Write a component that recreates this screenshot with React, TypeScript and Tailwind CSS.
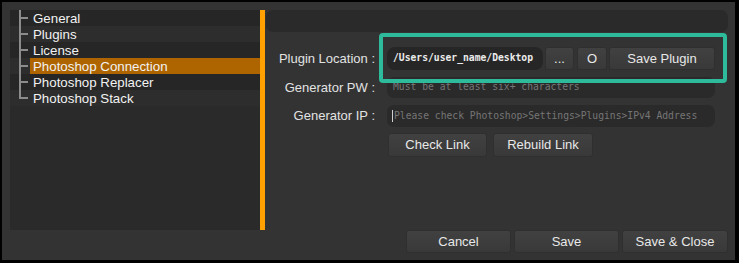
import React from "react";

const sans = { fontFamily: '"Liberation Sans", Arial, sans-serif' };
const mono = { fontFamily: '"DejaVu Sans Mono", "Liberation Mono", monospace' };

const treeItems = [
  "General",
  "Plugins",
  "License",
  "Photoshop Connection",
  "Photoshop Replacer",
  "Photoshop Stack",
];

function Btn({ children, className = "" }: { children: React.ReactNode; className?: string }) {
  return (
    <div
      className={
        "flex items-center justify-center rounded-[3px] border border-[#2f2f2f] bg-gradient-to-b from-[#414141] to-[#393939] text-[13px] text-[#e8e8e8] " +
        className
      }
    >
      {children}
    </div>
  );
}

export default function App() {
  return (
    <div className="w-[739px] h-[263px] bg-black pt-[2px] pl-[2px] pr-[4px] pb-[3px]" style={sans}>
      <div className="w-full h-full bg-[#333333] pt-[8px] pl-[8px] pr-[7px] pb-[7px] flex flex-col">
        <div className="flex h-[220px]">
          {/* Tree panel */}
          <div className="w-[250px] h-full bg-[#2a2a2a] relative">
            {treeItems.map((t, i) => {
              const active = i === 3;
              const last = i === treeItems.length - 1;
              return (
                <div
                  key={t}
                  className={
                    "h-[16px] flex items-stretch " + (i % 2 === 0 ? "bg-[#262626]" : "bg-[#2d2d2d]")
                  }
                >
                  <div className="w-[20px] relative shrink-0">
                    <div
                      className={
                        "absolute left-[9px] top-0 w-[2px] bg-[#8c8c8c] " + (last ? "h-[9px]" : "h-[16px]")
                      }
                    />
                    <div className="absolute left-[9px] top-[7px] w-[9px] h-[2px] bg-[#8c8c8c]" />
                  </div>
                  <div
                    className={
                      "flex-1 flex items-center pl-[3px] pt-[1px] text-[13.3px] leading-none text-[#f2f2f2] " +
                      (active ? "bg-[#ae6500]" : "")
                    }
                  >
                    {t}
                  </div>
                </div>
              );
            })}
          </div>
          {/* Orange splitter */}
          <div className="w-[5px] h-full bg-[#ffa200]" />
          {/* Right panel */}
          <div className="flex-1 relative flex flex-col">
            <div className="h-[22px] bg-[#2a2a2a] rounded-[7px] ml-[1px]" />
            <div className="mt-[15px] flex items-center h-[23px]">
              <div className="w-[111px] text-right text-[13px] text-[#e2e2e2] pr-[1px]">Plugin Location :</div>
              <div className="ml-[11px] flex items-center h-[23px]">
                <div
                  className="w-[156px] h-[23px] rounded-[8px] bg-[#262626] flex items-center pl-[6px] text-[9.7px] font-bold text-[#ececec] whitespace-nowrap"
                  style={mono}
                >
                  /Users/user_name/Desktop
                </div>
                <Btn className="ml-[2px] w-[29px] h-[23px]">...</Btn>
                <Btn className="ml-[3px] w-[30px] h-[23px]">O</Btn>
                <Btn className="ml-[2px] w-[106px] h-[23px]">Save Plugin</Btn>
              </div>
            </div>
            <div className="mt-[7px] flex items-center h-[21px]">
              <div className="w-[111px] text-right text-[13px] text-[#e2e2e2] pr-[1px]">Generator PW :</div>
              <div
                className="ml-[11px] w-[328px] h-[21px] rounded-[7px] bg-[#2a2a2a] flex items-center pl-[6px] text-[9.7px] text-[#767676] whitespace-nowrap"
                style={mono}
              >
                Must be at least six+ characters
              </div>
            </div>
            <div className="mt-[7px] flex items-center h-[22px]">
              <div className="w-[111px] text-right text-[13px] text-[#e2e2e2] pr-[1px]">Generator IP :</div>
              <div
                className="ml-[11px] w-[328px] h-[22px] rounded-[7px] bg-[#2a2a2a] flex items-center pl-[6px] text-[9.7px] text-[#767676] whitespace-nowrap"
                style={mono}
              >
                <span className="w-[1px] h-[12px] bg-[#cfcfcf] mr-[1px] -ml-[1px]" />
                Please check Photoshop&gt;Settings&gt;Plugins&gt;IPv4 Address
              </div>
            </div>
            <div className="mt-[6px] flex ml-[123px] h-[24px]">
              <Btn className="w-[99px] h-[24px]">Check Link</Btn>
              <Btn className="ml-[6px] w-[100px] h-[24px]">Rebuild Link</Btn>
            </div>
            {/* Teal highlight annotation */}
            <div className="absolute left-[114px] top-[23px] w-[348px] h-[50px] border-[4px] border-[#2dbb9c] rounded-[4px] pointer-events-none" />
          </div>
        </div>
        <div className="flex justify-end h-[23px]">
          <Btn className="w-[105px] h-[23px]">Cancel</Btn>
          <Btn className="ml-[3px] w-[105px] h-[23px]">Save</Btn>
          <Btn className="ml-[3px] w-[106px] h-[23px]">Save &amp; Close</Btn>
        </div>
      </div>
    </div>
  );
}
